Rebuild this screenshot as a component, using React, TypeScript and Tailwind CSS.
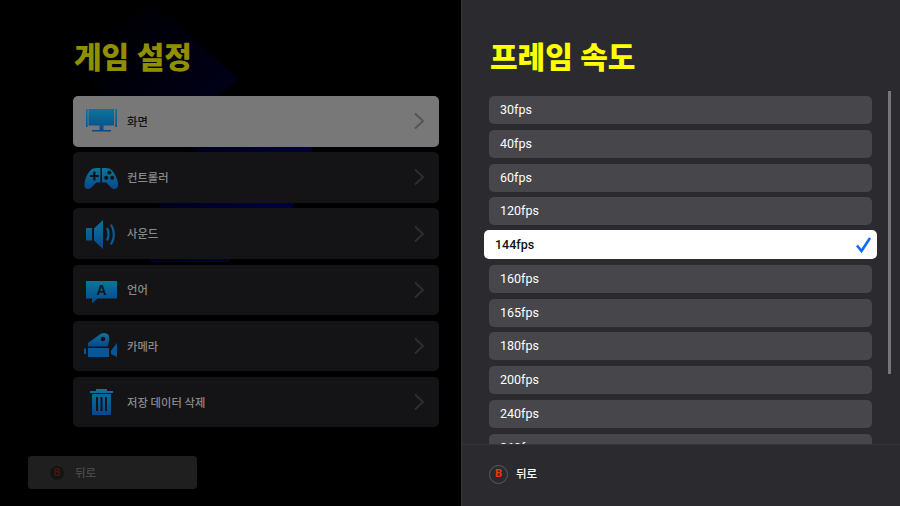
const FONT = `font-['Roboto','Noto_Sans_CJK_KR',sans-serif]`

function Grad({ id }: { id: string }) {
  return (
    <defs>
      <linearGradient id={id} x1="0" y1="0" x2="0" y2="1">
        <stop offset="0" stopColor="#0a7698" />
        <stop offset="1" stopColor="#09478e" />
      </linearGradient>
    </defs>
  )
}

function MonitorIcon() {
  return (
    <svg width="36" height="36" viewBox="0 0 36 36">
      <Grad id="g1" />
      <path fill="url(#g1)" d="M3 6h1.600v18H3zM32.200 6H34v18h-1.800zM5.500 6h25.500v16.500H5.500zM16.500 22.500h4V27H28v1.600H9V27h7.500z" />
    </svg>
  )
}

function PadIcon() {
  return (
    <svg width="36" height="36" viewBox="0 0 36 36">
      <Grad id="g2" />
      <path
        fill="url(#g2)"
        d="M17.400 9v14.500h-4.200l-5 5.200C6.400 30.400 3.600 30.400 2.200 28.800.8 27 1.200 23.500 2.500 20 4 15.500 6.800 11.200 9.500 9.800 11 9 14 8.700 17.400 9zM19 9c3.400-.3 6.400 0 7.900.8 2.700 1.400 5.500 5.700 7 10.200 1.300 3.500 1.700 7 .3 8.800-1.400 1.600-4.200 1.600-6-.1l-5-5.200H19z"
      />
      <path fill="#141416" d="M10.300 12.500h2.200v3.400h3.400v2.200h-3.400v3.400h-2.200v-3.400H6.900v-2.200h3.400z" />
      <circle cx="26.300" cy="13.500" r="2.100" fill="#141416" />
      <circle cx="23.200" cy="18.800" r="2.100" fill="#141416" />
      <circle cx="29.200" cy="18.800" r="2.100" fill="#141416" />
    </svg>
  )
}

function SpeakerIcon() {
  return (
    <svg width="36" height="36" viewBox="0 0 36 36">
      <Grad id="g3" />
      <path fill="url(#g3)" d="M3 12h6v12.500H3zM11 12.500 20 4v29l-9-8.500z" />
      <path d="M24 12c2 3.500 2 9 0 12.500" fill="none" stroke="#0a6096" strokeWidth="2.200" />
      <path d="M28 8.500c3.800 6 3.800 14 0 20" fill="none" stroke="#0a5a94" strokeWidth="2.200" />
    </svg>
  )
}

function LanguageIcon() {
  return (
    <svg width="36" height="36" viewBox="0 0 36 36">
      <Grad id="g4" />
      <path fill="url(#g4)" d="M3 9h31v17.500H14.500L9 31.500v-5H3z" />
      <text x="18.500" y="22.500" textAnchor="middle" fontSize="14" fontWeight="900" fill="#141416" fontFamily="'Liberation Sans',sans-serif">
        A
      </text>
    </svg>
  )
}

function CameraIcon() {
  return (
    <svg width="36" height="36" viewBox="0 0 36 36">
      <Grad id="g5" />
      <path
        fillRule="evenodd"
        fill="url(#g5)"
        d="M5 18.500v-3.500L17.500 6c3-2 7-1.200 8.300 1.500 1 2.200.4 6-1.300 11zM20 8.700a2.300 2.300 0 1 0 0 4.600 2.300 2.300 0 0 0 0-4.600z"
      />
      <path fill="#0a5593" d="M5 20h21v9H5zM1 20.500h2V26H1zM28 22.500 34 15v14l-6-3z" />
    </svg>
  )
}

function TrashIcon() {
  return (
    <svg width="36" height="36" viewBox="0 0 36 36">
      <Grad id="g6" />
      <path
        fillRule="evenodd"
        fill="url(#g6)"
        d="M13 5h11v2h6v2H7V7h6zM9 10h19v19.500c0 1-.6 1.500-1.500 1.500h-16C9.600 31 9 30.500 9 29.500zM13 13v14h2V13zM17.500 13v14h2V13zM22 13v14h2V13z"
      />
    </svg>
  )
}

function Chevron({ color }: { color: string }) {
  return (
    <svg width="12" height="18" viewBox="0 0 12 18" fill="none" stroke={color} strokeWidth="2">
      <path d="M2 1.500 10 9l-8 7.500" />
    </svg>
  )
}

const MENU = [
  { label: '화면', Icon: MonitorIcon },
  { label: '컨트롤러', Icon: PadIcon },
  { label: '사운드', Icon: SpeakerIcon },
  { label: '언어', Icon: LanguageIcon },
  { label: '카메라', Icon: CameraIcon },
  { label: '저장 데이터 삭제', Icon: TrashIcon },
]

const RATES = ['30fps', '40fps', '60fps', '120fps', '144fps', '160fps', '165fps', '180fps', '200fps', '240fps', '360fps']

export default function App() {
  return (
    <div className={`w-[900px] h-[506px] flex overflow-hidden bg-black ${FONT}`}>
      <div className="relative w-[461px] h-full shrink-0 overflow-hidden bg-black">
        <svg className="absolute inset-0" width="461" height="506" viewBox="0 0 461 506">
          <defs>
            <linearGradient id="bgShape" gradientUnits="userSpaceOnUse" x1="110" y1="20" x2="300" y2="170">
              <stop offset="0" stopColor="#000002" />
              <stop offset="0.6" stopColor="#00001a" />
              <stop offset="1" stopColor="#00003c" />
            </linearGradient>
          </defs>
          <path fill="url(#bgShape)" d="M150 0 238 79 198 112 313 146 292 208 228 262 150 262 160 202 198 152 100 92 75 65z" />
        </svg>

        <div className="relative flex flex-col h-full">
          <h2 className="ml-[74px] mt-[40px] h-[36px] text-[30px] leading-[36px] font-black text-[#8f8f00]">게임 설정</h2>
          <ul className="ml-[73px] mt-[20px] w-[366px] flex flex-col gap-[5.7px]">
            {MENU.map(({ label, Icon }, i) => (
              <li
                key={label}
                className={`h-[50.5px] rounded-[5px] pl-[10px] pr-[14px] flex items-center ${i === 0 ? 'bg-[#787878]' : 'bg-[#141416]'}`}
              >
                <Icon />
                <span className={`ml-[8px] pt-[4px] text-[11.3px] font-medium ${i === 0 ? 'text-[#111111]' : 'text-[#8a8a8a]'}`}>{label}</span>
                <span className="ml-auto flex">
                  <Chevron color={i === 0 ? '#555555' : '#2e2e30'} />
                </span>
              </li>
            ))}
          </ul>
          <div className="ml-[28px] mt-[29px] w-[169px] h-[33px] rounded-[4px] bg-[#1f1f20] pl-[22px] flex items-center">
            <span className="w-[14px] h-[14px] rounded-full bg-[#141414] flex items-center justify-center text-[10px] font-bold text-[#4d150a]">B</span>
            <span className="ml-[11px] pt-px text-[11.5px] font-medium text-[#484848]">뒤로</span>
          </div>
        </div>
      </div>

      <div className="relative flex-1 h-full flex flex-col bg-[#2a2a2f] border-l border-[#36363a]">
        <h1 className="ml-[28px] mt-[40px] h-[36px] text-[30px] leading-[36px] font-black text-[#ffff00]">프레임 속도</h1>
        <div className="flex-1 min-h-0 overflow-hidden mt-[20px] relative">
          <ul className="ml-[27px] w-[383px] flex flex-col gap-[5.75px]">
            {RATES.map((rate) =>
              rate === '144fps' ? (
                <li
                  key={rate}
                  className="-mx-[5px] -mt-px h-[29px] shrink-0 rounded-[5px] bg-white pl-[11px] pr-[5px] pt-px flex items-center justify-between text-[12.5px] font-medium text-[#111111]"
                >
                  {rate}
                  <svg width="18" height="18" viewBox="0 0 18 18" fill="none" stroke="#0a6cff" strokeWidth="2.600">
                    <path d="M3 9.500 7.500 15 16 2" />
                  </svg>
                </li>
              ) : (
                <li
                  key={rate}
                  className="h-[28px] shrink-0 rounded-[5px] bg-[#46464b] pl-[11px] pt-px flex items-center text-[12.5px] font-normal text-white"
                >
                  {rate}
                </li>
              ),
            )}
          </ul>
        </div>
        <div className="absolute left-[426px] top-[91px] w-[3px] h-[283px] bg-[#77777a]" />
        <div className="h-[62px] shrink-0 border-t border-[#36363a] pl-[27px] pb-[3px] flex items-center">
          <span className="w-[19px] h-[19px] rounded-full border border-[#5a5a5e] flex items-center justify-center text-[11px] font-bold text-[#e8390e]">B</span>
          <span className="ml-[8px] pt-px text-[11.5px] font-medium text-white">뒤로</span>
        </div>
      </div>
    </div>
  )
}
